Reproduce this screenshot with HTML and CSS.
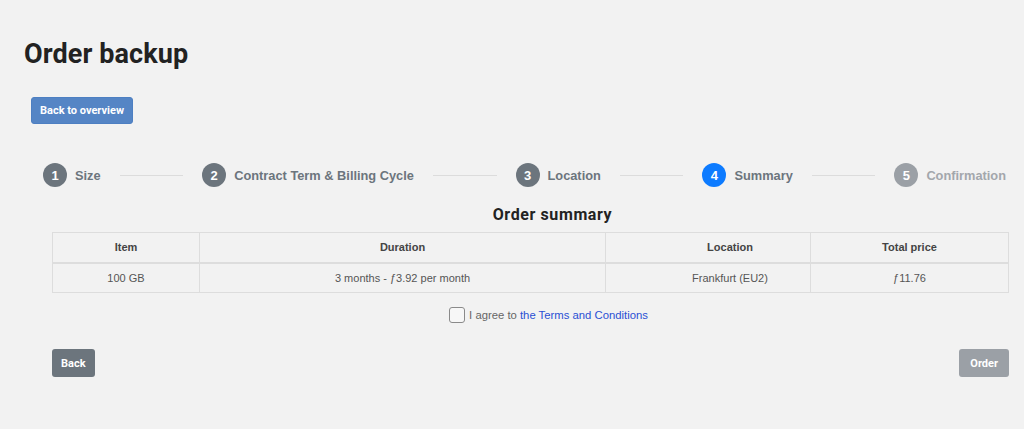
FILE: index.html
```html
<!DOCTYPE html>
<html>
<head>
<meta charset="utf-8">
<link rel="stylesheet" href="styles.css">
</head>
<body>
<div class="page">
  <h1 class="title">Order backup</h1>
  <button class="btn-overview">Back to overview</button>
  <div class="steps">
    <div class="step"><span class="num">1</span><span class="label">Size</span></div>
    <div class="line"></div>
    <div class="step"><span class="num">2</span><span class="label">Contract Term &amp; Billing Cycle</span></div>
    <div class="line"></div>
    <div class="step"><span class="num">3</span><span class="label">Location</span></div>
    <div class="line"></div>
    <div class="step active"><span class="num">4</span><span class="label">Summary</span></div>
    <div class="line"></div>
    <div class="step pending"><span class="num">5</span><span class="label">Confirmation</span></div>
  </div>
  <div class="content">
    <h2 class="subtitle">Order summary</h2>
    <table class="summary">
      <thead>
        <tr><th class="c1">Item</th><th class="c2">Duration</th><th class="c3">Location</th><th class="c4">Total price</th></tr>
      </thead>
      <tbody>
        <tr><td>100 GB</td><td>3 months - ƒ3.92 per month</td><td class="c3">Frankfurt (EU2)</td><td>ƒ11.76</td></tr>
      </tbody>
    </table>
    <label class="agree"><span class="box"></span>I agree to&nbsp;<a href="#">the Terms and Conditions</a></label>
    <div class="actions">
      <button class="btn btn-back">Back</button>
      <button class="btn btn-order">Order</button>
    </div>
  </div>
</div>
</body>
</html>
```
FILE: styles.css
```css
* { box-sizing: border-box; }
html, body { margin: 0; padding: 0; background: #f2f2f2; }
body { font-family: "Liberation Sans", Arial, sans-serif; color: #333; }
.page { padding: 38px 15px 0 24px; }
.title {
  margin: 0;
  font-family: "Roboto", sans-serif;
  font-weight: 700;
  font-size: 27px;
  line-height: 32px;
  color: #222;
  letter-spacing: 0.1px;
}
.btn-overview {
  margin: 27px 0 0 7px;
  display: block;
  height: 27px;
  padding: 0 8px;
  background: #5585c5;
  border: 1px solid #4d7fc2;
  border-radius: 3px;
  color: #fff;
  font-family: "Roboto", sans-serif;
  font-weight: 700;
  font-size: 11px;
}
.steps {
  display: flex;
  align-items: center;
  margin: 39px 0 0 19px;
  width: 963px;
}
.step { display: flex; align-items: center; gap: 8px; }
.num {
  width: 24px; height: 24px; border-radius: 50%;
  background: #6c757d; color: #fff;
  display: flex; align-items: center; justify-content: center;
  font-weight: 700; font-size: 13px;
}
.label { font-weight: 700; font-size: 12.8px; color: #6c757d; }
.active .num { background: #0d7bff; }
.pending .num { background: #9ba0a6; }
.pending .label { color: #a3a7ac; }
.line { flex: 1; height: 1px; background: #dcdcdc; margin: 0 19px; }
.content { margin-left: 28px; width: 957px; }
.subtitle {
  margin: 18px 0 0;
  padding-left: 44px;
  text-align: center;
  font-family: "Roboto", sans-serif;
  font-weight: 700;
  font-size: 16px;
  line-height: 20px;
  color: #222;
  letter-spacing: 0.6px;
}
.summary {
  margin-top: 7px;
  width: 957px;
  border-collapse: collapse;
  font-size: 11px;
}
.summary th, .summary td {
  border: 1px solid #dddddd;
  text-align: center;
  height: 30px;
  padding: 0 8px;
}
.summary th { font-weight: 700; color: #444; border-bottom-width: 2px; }
.summary td { color: #555; }
.c1 { width: 147px; }
.c2 { width: 406px; }
.summary .c3 { width: 205px; padding-left: 52px; }
.agree {
  display: flex;
  align-items: center;
  justify-content: center;
  margin-top: 14px;
  padding-left: 36px;
  font-size: 11.3px;
  color: #666;
}
.box {
  width: 16px; height: 16px;
  border: 1px solid #8a8a8a;
  border-radius: 3px;
  background: #f7f7f7;
  margin-right: 4px;
}
.agree a { color: #2a50d4; text-decoration: none; }
.actions { display: flex; justify-content: space-between; margin-top: 26px; }
.btn {
  height: 28px;
  padding: 0 9px;
  border: none;
  border-radius: 3px;
  color: #fff;
  font-family: "Roboto", sans-serif;
  font-weight: 700;
  font-size: 11px;
}
.btn-back { background: #6c757d; }
.btn-order { background: #9ba0a6; padding: 0 11px; }
```
